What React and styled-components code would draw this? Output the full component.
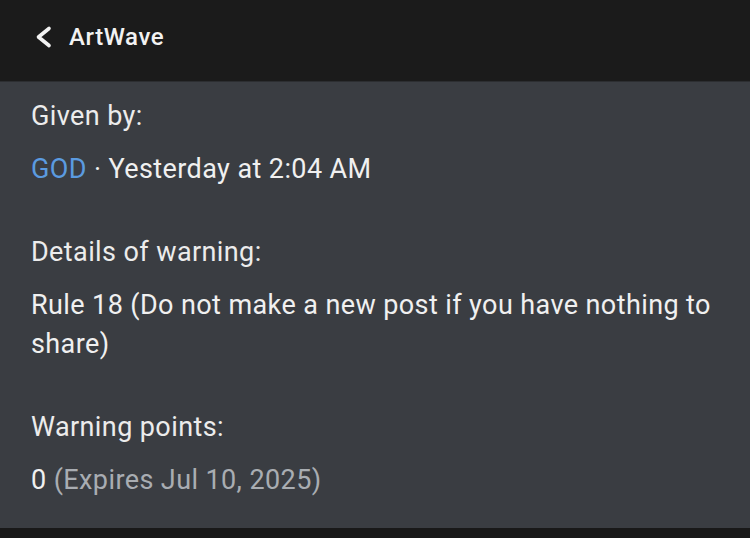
import React from "react";
import styled, { createGlobalStyle } from "styled-components";

const Global = createGlobalStyle`
  html, body { margin: 0; padding: 0; background: #191919; }
  body { font-family: Roboto, "Noto Sans", sans-serif; -webkit-font-smoothing: antialiased; }
`;

const Page = styled.div`
  width: 750px;
  height: 538px;
  display: flex;
  flex-direction: column;
  background: #191919;
  overflow: hidden;
`;

const Header = styled.header`
  height: 82px;
  flex: none;
  display: flex;
  align-items: center;
  gap: 15px;
  padding: 0 0 7px 32px;
  background: #1b1b1b;
  border-bottom: 1px solid #2c2e31;
  box-sizing: border-box;
`;

const BackButton = styled.button`
  border: 0;
  background: none;
  padding: 0;
  display: flex;
  align-items: center;
  color: #f2f2f2;
  cursor: pointer;
`;

const Title = styled.h1`
  margin: 0;
  font-size: 24px;
  font-weight: 500;
  color: #f2f2f2;
  letter-spacing: 0.6px;
`;

const Panel = styled.main`
  height: 446px;
  flex: none;
  background: #3a3d42;
  padding: 15px 31px 0;
  box-sizing: border-box;
  display: flex;
  flex-direction: column;
  gap: 44px;
`;

const Section = styled.section`
  display: flex;
  flex-direction: column;
  gap: 14px;
`;

const Label = styled.div`
  font-size: 27px;
  line-height: 39px;
  letter-spacing: 0.4px;
  color: #ececec;
`;

const Value = styled.div`
  font-size: 27px;
  line-height: 39px;
  letter-spacing: 0.4px;
  color: #f0f0f0;
`;

const Link = styled.span`
  color: #5b9be0;
`;

const Muted = styled.span`
  color: #a9adb2;
`;

const Chevron = () => (
  <svg width="22" height="26" viewBox="0 0 22 26" fill="none">
    <path d="M17 4.5 L6.5 13 L17 21.5" stroke="currentColor" strokeWidth="3.6" strokeLinecap="round" strokeLinejoin="round" />
  </svg>
);

export default function App() {
  return (
    <Page>
      <Global />
      <Header>
        <BackButton aria-label="Back"><Chevron /></BackButton>
        <Title>ArtWave</Title>
      </Header>
      <Panel>
        <Section>
          <Label>Given by:</Label>
          <Value><Link>GOD</Link> · Yesterday at 2:04 AM</Value>
        </Section>
        <Section>
          <Label>Details of warning:</Label>
          <Value>Rule 18 (Do not make a new post if you have nothing to share)</Value>
        </Section>
        <Section>
          <Label>Warning points:</Label>
          <Value>0 <Muted>(Expires Jul 10, 2025)</Muted></Value>
        </Section>
      </Panel>
    </Page>
  );
}
